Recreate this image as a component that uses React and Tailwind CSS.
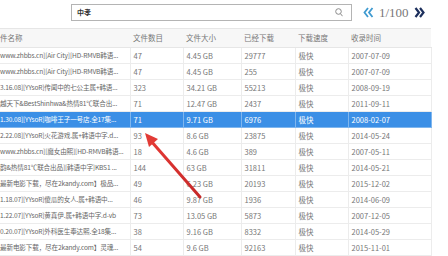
import { useState } from "react";

const rows = [
  ["www.zhbbs.cn][Air City][HD-RMVB韩语...", "47", "4.45 GB", "29777", "极快", "2007-07-09"],
  ["www.zhbbs.cn][Air City][HD-RMVB韩语...", "47", "4.45 GB", "255", "极快", "2007-07-09"],
  ["3.16.08][YYsoR]传闻中的七公主属+韩语...", "323", "34.21 GB", "55213", "极快", "2008-09-19"],
  ["越天下&BestShinhwa&热情81℃联合出...", "71", "12.47 GB", "2437", "极快", "2011-09-11"],
  ["1.30.08][YYsoR]咖啡王子一号店.全17集...", "71", "9.71 GB", "6976", "极快", "2008-02-07"],
  ["2.22.08][YYsoR]火花游戏.属+韩语中字.d...", "93", "8.6 GB", "23875", "极快", "2014-05-24"],
  ["www.zhbbs.cn][魔女由熙][HD-RMVB韩语...", "18", "4.6 GB", "389", "极快", "2007-05-11"],
  ["韵&热情81℃联合出品][韩语中字]KBS1 ...", "144", "63 GB", "31811", "极快", "2014-05-21"],
  ["最新电影下载，尽在2kandy.com】极品...", "49", "6.23 GB", "20193", "极快", "2015-12-02"],
  ["1.18.07][YYsoR]傻瓜的女人.属+韩语中...", "46", "9.87 GB", "1936", "极快", "2014-06-09"],
  ["1.22.07][YYsoR]黄真伊.属+韩语中字.d-vb", "73", "13.05 GB", "5873", "极快", "2007-12-05"],
  ["0.20.07][YYsoR]外科医生奉达熙.全18集...", "38", "9.16 GB", "8332", "极快", "2014-05-29"],
  ["最新电影下载，尽在2kandy.com】灵魂...", "54", "9.6 GB", "92163", "极快", "2015-11-01"],
];

const headers = ["件名称", "文件数目", "文件大小", "已经下载", "下载速度", "收录时间"];

export default function App() {
  const [selected, setSelected] = useState(4);

  return (
    <div
      className="relative w-[448px] h-[256px] overflow-hidden bg-white text-[#777]"
      style={{ fontFamily: '"Noto Sans CJK SC", sans-serif' }}
    >
      {/* top bar: search + pager */}
      <div className="h-[28px] flex items-start pt-[4px]">
        <div className="ml-[71px] w-[281px] h-[17px] border border-[#b4b4b4] flex items-center justify-between pl-[5px] pr-[8px]">
          <span className="text-[7px] text-[#333] font-bold">中孝</span>
          <svg width="8" height="9" viewBox="0 0 8 9" fill="none" stroke="#8a8a8a" strokeWidth="1">
            <circle cx="3.5" cy="3.5" r="2.8" />
            <path d="M5.5 5.7 L7.5 8.2" />
          </svg>
        </div>
        <div className="ml-[11px] flex items-center gap-[5px] h-[17px]">
          <svg width="11" height="11" viewBox="0 0 11 11" fill="none" stroke="#3f9ad0" strokeWidth="1.8">
            <path d="M5 1 L1.5 5.5 L5 10" />
            <path d="M9.5 1 L6 5.5 L9.5 10" />
          </svg>
          <span className="text-[13px] leading-none text-[#777]" style={{ fontFamily: '"Liberation Serif", serif' }}>
            1/100
          </span>
          <svg width="11" height="11" viewBox="0 0 11 11" fill="none" stroke="#1c2f5c" strokeWidth="2.2">
            <path d="M1.5 1 L5 5.5 L1.5 10" />
            <path d="M6 1 L9.5 5.5 L6 10" />
          </svg>
        </div>
      </div>

      <table className="w-[431px] table-fixed border-collapse text-[7.5px] leading-none">
        <colgroup>
          <col className="w-[130px]" />
          <col className="w-[53px]" />
          <col className="w-[58px]" />
          <col className="w-[54px]" />
          <col className="w-[53px]" />
          <col className="w-[83px]" />
        </colgroup>
        <thead>
          <tr className="h-[19px] bg-[#f7f7f7] border-t border-[#e6e6e6]">
            {headers.map((h, i) => (
              <th
                key={h}
                className={`text-left font-normal text-[#777] border-b border-[#e6e6e6] ${i === 0 ? "pl-0" : "pl-[3px]"}`}
              >
                {h}
              </th>
            ))}
          </tr>
        </thead>
        <tbody>
          {rows.map((r, ri) => {
            const sel = ri === selected;
            return (
              <tr
                key={ri}
                onClick={() => setSelected(ri)}
                className={`h-[16px] ${sel ? "bg-[#3b8fe6] text-white" : "bg-white"}`}
              >
                {r.map((c, ci) => (
                  <td
                    key={ci}
                    className={`whitespace-nowrap overflow-hidden border-b border-r ${
                      sel ? "border-[#7fb6ee]" : "border-[#ececec]"
                    } ${ci === 0 ? "pl-0 text-[6.6px] tracking-[-0.15px]" : "pl-[3px]"} ${
                      ci === 0 && !sel ? "text-[#666]" : ""
                    }`}
                  >
                    {c}
                  </td>
                ))}
              </tr>
            );
          })}
        </tbody>
      </table>

      {/* red arrow annotation */}
      <svg className="absolute left-0 top-0 pointer-events-none" width="448" height="256">
        <defs>
          <linearGradient id="arr" x1="0" y1="0" x2="1" y2="1">
            <stop offset="0" stopColor="#e53935" />
            <stop offset="1" stopColor="#c62828" />
          </linearGradient>
        </defs>
        <line x1="200" y1="197" x2="151" y2="141" stroke="url(#arr)" strokeWidth="3" strokeLinecap="round" />
        <polygon points="145,133 158,139 149,147" fill="#e23b36" />
      </svg>
    </div>
  );
}
